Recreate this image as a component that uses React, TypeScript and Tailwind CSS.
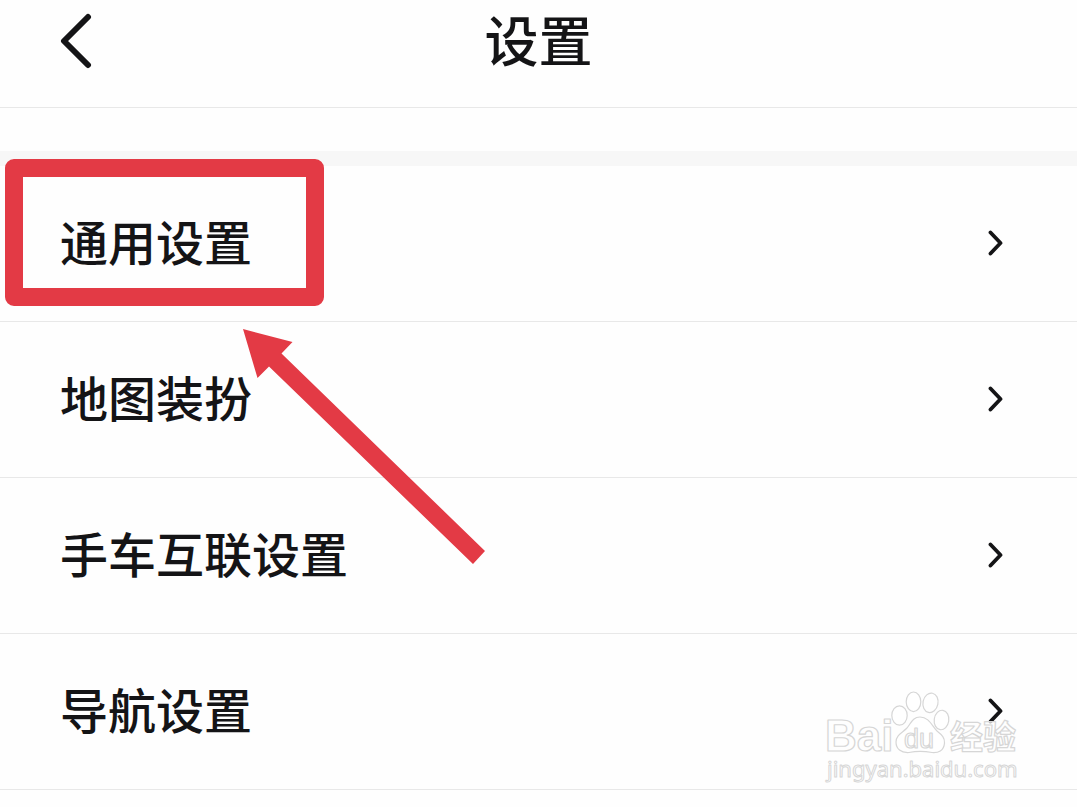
const items = ["通用设置", "地图装扮", "手车互联设置", "导航设置"];

function Chevron() {
  return (
    <svg className="h-7 w-4 shrink-0" viewBox="0 0 16 28" fill="none" aria-hidden="true">
      <path d="M2.5 3.5 L12.5 14 L2.5 24.5" stroke="#141416" strokeWidth="3.8" strokeLinecap="round" strokeLinejoin="round" />
    </svg>
  );
}

function Highlight() {
  return (
    <div className="pointer-events-none absolute -top-[7px] left-[5px] h-[147px] w-[319px] rounded-[9px] border-[18px] border-[#e33a45]" />
  );
}

function Arrow() {
  return (
    <svg
      className="pointer-events-none absolute top-[163px] left-[243px] z-10 h-[236px] w-[243px]"
      viewBox="0 0 243 236"
      aria-hidden="true"
    >
      <path d="M0 0 L49.5 13 L38.5 24.5 L242 222 L230 235 L26 37.5 L14.5 49 Z" fill="#e33a45" />
    </svg>
  );
}

function Watermark() {
  return (
    <div className="pointer-events-none absolute top-[689px] right-[54px] z-10 h-[96px] w-[200px]">
      <svg
        className="h-full w-full"
        viewBox="0 0 200 96"
        fill="#ffffff"
        stroke="#d6d6d6"
        strokeWidth="1.2"
        strokeLinejoin="round"
        role="img"
        aria-label="Baidu 经验"
      >
        <ellipse cx="76.5" cy="26.5" rx="7.7" ry="9.7" />
        <ellipse cx="90.5" cy="12.8" rx="7.3" ry="9.8" />
        <ellipse cx="107.5" cy="13.8" rx="7.5" ry="9.8" transform="rotate(12 107.5 13.8)" />
        <ellipse cx="118.5" cy="31" rx="7.3" ry="9.8" transform="rotate(8 118.5 31)" />
        <path d="M97 28 C106 28 109 37 114 42 C119 46 122 49 121.500 54 C121 62 115 64 109 63.500 C101 62 93 62 86 63.500 C78 64 73 60 73 53 C73 46 79 44 84 39 C88 34 90 28 97 28 Z" />
        <text x="2" y="62" fontSize="44" fontWeight="700" fontFamily="Liberation Sans, sans-serif" fillOpacity="0.7">Bai</text>
        <text x="81" y="59" fontSize="27" fontWeight="400" fontFamily="Liberation Sans, sans-serif">du</text>
        <text x="127" y="60" fontSize="33" fontWeight="700" fontFamily="Noto Sans CJK SC, sans-serif" fillOpacity="0.7">经验</text>
        <text x="4" y="88" fontSize="22" fontWeight="400" strokeWidth="1" fontFamily="Noto Sans, sans-serif">jingyan.baidu.com</text>
      </svg>
    </div>
  );
}

export default function App() {
  return (
    <div className="relative min-h-screen overflow-hidden bg-[#fefefe] font-['Noto_Sans_CJK_SC',sans-serif] text-[#141416]">
      <header className="grid grid-cols-[1fr_auto_1fr] items-center border-b border-[#e8e8e8] pb-[29px]">
        <button type="button" aria-label="返回" className="ml-[60px] w-8 pt-1">
          <svg className="h-14 w-8" viewBox="0 0 32 56" fill="none" aria-hidden="true">
            <path d="M28 4 L4 28 L28 52" stroke="#141416" strokeWidth="6" strokeLinecap="round" strokeLinejoin="round" />
          </svg>
        </button>
        <h1 className="text-[54px] leading-[78px] font-medium">设置</h1>
      </header>
      <main className="pt-[43px]">
        <div className="h-[15px] bg-[#f7f7f7]" />
        <div className="relative">
          <ul>
            {items.map((label) => (
              <li key={label}>
                <button
                  type="button"
                  className="flex w-full items-center justify-between border-b border-[#e8e8e8] pt-10 pb-[42px] pr-[73px] pl-[60px] text-left text-[48px] leading-[68px] font-medium"
                >
                  <span className="pb-[5px]">{label}</span>
                  <Chevron />
                </button>
              </li>
            ))}
          </ul>
          <Highlight />
          <Arrow />
        </div>
      </main>
      <Watermark />
    </div>
  );
}
